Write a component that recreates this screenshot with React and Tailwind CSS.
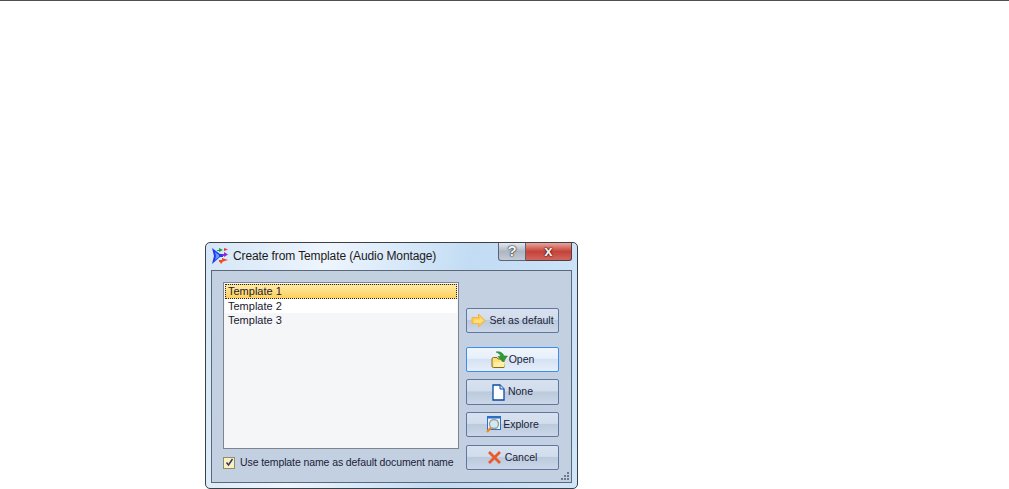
import React from 'react';

const AppIcon = () => (
  <svg width="17" height="16" viewBox="0 0 17 16" className="shrink-0">
    <path d="M0 0 L8 6 L11 6 L11 9 L8 9 L0 16 L2 8 Z" fill="#2438f2" />
    <path d="M3 4 L7 7 L7 9 L3 12 L4 8 Z" fill="#5aa0ff" />
    <path d="M5 2h2V0l4 2-4 2V3H5z" fill="#12a548" />
    <path d="M12 2V0l4 1.500-4 1.500z" fill="#e8343c" />
    <path d="M10 6h2V4l4 2.500-4 2.500V8h-2z" fill="#8a2fd8" />
    <path d="M7 12h3v-2l6 2-5 1.500 -2 2.500-1-2H7z" fill="#f2491e" />
  </svg>
);

const ArrowIcon = () => (
  <svg width="15" height="15" viewBox="0 0 15 15" className="shrink-0">
    <path d="M1 4.500h6.500V1l6.500 6.500-6.500 6.500v-3.500H1z" fill="#fdc94a" stroke="#f5b14c" strokeWidth="1" />
    <path d="M3 6.500h6V4l3.500 3.500L9 10H3z" fill="#ffdf7a" />
  </svg>
);

const OpenIcon = () => (
  <svg width="17" height="18" viewBox="0 0 17 18" className="shrink-0">
    <path d="M1 8q0-1.500 1.500-1.500H6l1 1.500h6v8.500H2.500Q1 16.500 1 15z" fill="#fde07a" stroke="#8a6a14" />
    <path d="M3 11h11l-1 5H3z" fill="#fff0a8" />
    <path d="M5 1c4-1 7 1 8 4h3.500L12 11 7 5.500l3-.500C9 3 7.500 2 5 1z" fill="#2f9a36" stroke="#1f7a2a" strokeWidth=".5" />
  </svg>
);

const PageIcon = () => (
  <svg width="13" height="17" viewBox="0 0 13 17" className="shrink-0">
    <path d="M1 1h7l4 4v11H1z" fill="#fff" stroke="#0b4aa6" strokeWidth="1.300" />
    <path d="M8 1v4h4" fill="#dbe8f8" stroke="#0b4aa6" />
  </svg>
);

const ExploreIcon = () => (
  <svg width="15" height="18" viewBox="0 0 15 18" className="shrink-0">
    <rect x="1.500" y="0.500" width="13" height="13" fill="#e8f2fc" stroke="#2a6fc8" />
    <rect x="1.500" y="0.500" width="13" height="2" fill="#2a6fc8" />
    <circle cx="8" cy="8" r="4.500" fill="#cfe9f4" stroke="#a09a88" strokeWidth="1.300" />
    <path d="M5 11.500L1 16" stroke="#f08a20" strokeWidth="2.200" />
  </svg>
);

const CancelIcon = () => (
  <svg width="13" height="13" viewBox="0 0 13 13" className="shrink-0">
    <path d="M1 1l11 11M12 1L1 12" stroke="#ea5a2c" strokeWidth="2.800" />
  </svg>
);

const DialogButton = ({ icon, label, active, gap, className }) => (
  <button
    className={`w-[93px] flex items-center justify-center rounded-[2px] border text-[10.5px] text-[#1a2238] ${gap} ${
      active
        ? 'border-[#3d8cf0] bg-[linear-gradient(#f1f6fd_0%,#e6effa_45%,#d5e2f4_50%,#e6effa_100%)]'
        : 'border-[#62779e] bg-[linear-gradient(#d7e1ef_0%,#d2ddec_45%,#bccadd_50%,#cbd7e8_100%)]'
    } ${className}`}
  >
    {icon}
    <span>{label}</span>
  </button>
);

export default function App() {
  return (
    <div className="w-[1009px] h-[489px] bg-white overflow-hidden font-['Liberation_Sans',sans-serif]">
      <div className="h-px bg-[#505050]" />
      <div className="pl-[205px] pt-[241px]">
        {/* Dialog window */}
        <div className="w-[373px] h-[247px] flex flex-col rounded-[5px] border border-[#3a3f48] bg-[linear-gradient(100deg,#d5e6f6_0%,#eef5fd_30%,#c2dcf4_65%,#cfe5f8_100%)]">
          {/* Title bar */}
          <div className="h-[27px] flex items-start">
            <div className="flex items-center gap-[4px] pl-[6px] pt-[5px] flex-1">
              <AppIcon />
              <span className="text-[12px] tracking-[-0.11px] leading-[16px] text-[#1a1a1a]">Create from Template (Audio Montage)</span>
            </div>
            <div className="flex mr-[5px]">
              <div className="w-[28px] h-[18px] flex items-center justify-center rounded-bl-[3px] border border-t-0 border-[#5c6470] bg-[linear-gradient(#e4e9f0,#aeb6c2_50%,#c4cbd6)] text-[15px] font-bold text-[#f4f6f8] [text-shadow:0_0_1px_#111,0_0_2px_#111]">
                ?
              </div>
              <div className="w-[46px] h-[18px] flex items-center justify-center rounded-br-[3px] border border-l-0 border-t-0 border-[#5c3a3a] bg-[linear-gradient(#e8a59c,#c5433a_50%,#d0665c)] text-[15px] font-bold text-[#f8f0ee] [text-shadow:0_0_1px_#300,0_0_2px_#300]">
                x
              </div>
            </div>
          </div>
          {/* Client area */}
          <div className="mx-[5px] mb-[5px] flex-1 border border-[#5a6878] bg-[#c2d0e1] pl-[11px] pr-[12px] pt-[11px] flex gap-[7px] relative">
            <div className="w-[236px] flex flex-col">
              <div className="h-[167px] border border-[#7e858e] bg-[#f5f6f8] text-[11px] leading-[15px] text-[#1a2030]">
                <div className="h-[15px] mx-px mt-px border border-dotted border-[#222] bg-[linear-gradient(#ffe9a8,#fdd05a)] leading-[13px] pl-[2px]">Template 1</div>
                <div className="h-[14px] bg-white pl-[3px] mx-px">Template 2</div>
                <div className="pl-[3px] mx-px">Template 3</div>
              </div>
              <div className="flex items-center gap-[4px] mt-[6px]">
                <div className="w-[12px] h-[12px] flex items-center justify-center border border-[#8a8f70] bg-[#fdf0b8]">
                  <svg width="9" height="9" viewBox="0 0 9 9">
                    <path d="M1.500 4.500l2 2.500 4-6" fill="none" stroke="#2a3a70" strokeWidth="1.500" />
                  </svg>
                </div>
                <span className="pl-px text-[10.5px] tracking-[-0.1px] text-[#1a2238] whitespace-nowrap">Use template name as default document name</span>
              </div>
            </div>
            <div className="flex flex-col pt-[26px]">
              <DialogButton icon={<ArrowIcon />} label="Set as default" gap="gap-[3px]" className="h-[25px]" />
              <DialogButton icon={<OpenIcon />} label="Open" gap="gap-[1px]" active className="h-[25px] mt-[14px]" />
              <DialogButton icon={<PageIcon />} label="None" gap="gap-[3px]" className="h-[26px] mt-[7px]" />
              <DialogButton icon={<ExploreIcon />} label="Explore" gap="gap-[2px]" className="h-[25px] mt-[7px]" />
              <DialogButton icon={<CancelIcon />} label="Cancel" gap="gap-[4px]" className="h-[25px] mt-[8px]" />
            </div>
            {/* Resize grip */}
            <svg width="10" height="10" viewBox="0 0 10 10" className="absolute right-[1px] bottom-[1px]">
              <path d="M7 1h2v2H7zM4 4h2v2H4zM7 4h2v2H7zM1 7h2v2H1zM4 7h2v2H4zM7 7h2v2H7z" fill="#6a7a90" />
            </svg>
          </div>
        </div>
      </div>
    </div>
  );
}
